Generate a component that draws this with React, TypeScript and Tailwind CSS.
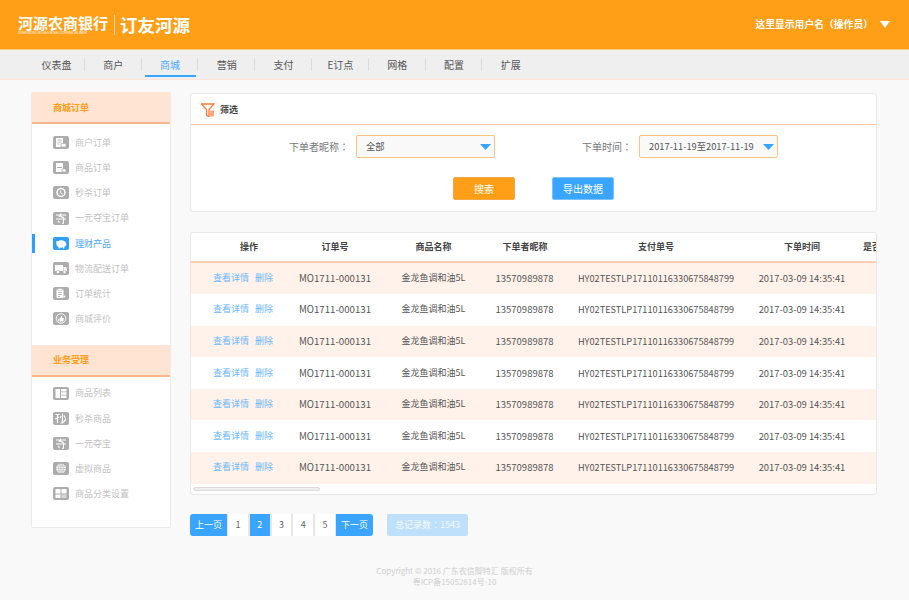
import React from "react";

const FONT = '"Noto Sans CJK SC","Noto Sans",sans-serif';
const TC = { fontFamily: '"Noto Sans CJK TC",sans-serif' };

const navItems = ["仪表盘", "商户", "商城", "营销", "支付", "E订点", "网格", "配置", "扩展"];

function Ico({ children, fill = "#acacac" }: { children: React.ReactNode; fill?: string }) {
  return (
    <svg width="16" height="13" viewBox="0 0 16 13" className="shrink-0">
      <rect width="16" height="13" rx="2" fill={fill} />
      {children}
    </svg>
  );
}

const W = "#fff";
const G = "#acacac";

const icons: Record<string, React.ReactNode> = {
  merchant: (
    <Ico>
      <path d="M3 2h7v9H3z" fill={W} />
      <path d="M4.5 4h4M4.5 6h4M4.5 8h2" stroke={G} strokeWidth="0.8" />
      <path d="M8 7.5h5v3.5H8z" fill={W} stroke={G} strokeWidth="0.7" />
    </Ico>
  ),
  goods: (
    <Ico>
      <path d="M3 2h7v9H3z" fill={W} />
      <path d="M4 6.5h5" stroke={G} strokeWidth="1" />
      <path d="M9 8h4v3H9z" fill={W} stroke={G} strokeWidth="0.7" />
    </Ico>
  ),
  clock: (
    <Ico>
      <circle cx="8" cy="6.5" r="4.7" fill={W} />
      <circle cx="8" cy="6.5" r="3.2" fill={G} />
      <path d="M7.6 4.4v2.4l2 1.2" stroke={W} strokeWidth="0.9" fill="none" />
    </Ico>
  ),
  duobao: (
    <Ico>
      <path d="M3 3h10M8 1.5L6 5M6.5 3.5L11 6M3 7h10M5 9l1.5 1.5M10.5 6v5l-1.5 .5" stroke={W} strokeWidth="1.1" fill="none" />
    </Ico>
  ),
  pig: (
    <Ico fill="#2f9fff">
      <ellipse cx="8.3" cy="7" rx="5" ry="3.7" fill={W} />
      <path d="M3 4l2.5 .5L4 7z" fill={W} />
      <path d="M5.5 10h1.5v1.5H5.5zM9.8 10h1.5v1.5H9.8z" fill={W} />
    </Ico>
  ),
  truck: (
    <Ico>
      <path d="M2 3h8v6H2z" fill={W} />
      <path d="M10.5 5H13l1 2v2h-3.5z" fill={W} />
      <circle cx="5" cy="10" r="1.6" fill={W} stroke={G} strokeWidth="0.6" />
      <circle cx="11.5" cy="10" r="1.6" fill={W} stroke={G} strokeWidth="0.6" />
    </Ico>
  ),
  stat: (
    <Ico>
      <path d="M3.5 2.5h7v8.5h-7z" fill={W} />
      <path d="M5 1.5h4v2H5z" fill={W} stroke={G} strokeWidth="0.5" />
      <path d="M5 5.5h4M5 7.5h4M5 9.5h2" stroke={G} strokeWidth="0.8" />
      <circle cx="11.5" cy="9.5" r="1" fill={W} />
    </Ico>
  ),
  review: (
    <Ico>
      <circle cx="8" cy="6.5" r="4.8" fill="none" stroke={W} strokeWidth="0.9" />
      <path d="M5.2 6.5h1.3v3H5.2zM7 6.5l1.4-2.6 .8.4-.3 1.7h2l-.5 3.5H7z" fill={W} />
    </Ico>
  ),
  list: (
    <Ico>
      <path d="M2.5 2h4.5v9H2.5z" fill={W} />
      <path d="M8 2h5.5v2.4H8zM8 5.3h5.5v2.4H8zM8 8.6h5.5V11H8z" fill={W} />
    </Ico>
  ),
  miao: (
    <Ico>
      <path d="M2.5 2.5h4M4.5 2.5v8.5M2.2 7l4-2M9.5 1.5v7.5l-1 .5M8 4L7.2 6M11 3.5l1.3 2.5M12.8 6.5c-.6 2.5-2 4-5 4.7" stroke={W} strokeWidth="1.1" fill="none" />
    </Ico>
  ),
  globe: (
    <Ico>
      <circle cx="8" cy="6.5" r="4.8" fill={W} />
      <path d="M3.2 6.5h9.6M3.9 4.2h8.2M3.9 8.8h8.2M8 1.7v9.6" stroke={G} strokeWidth="0.6" />
      <ellipse cx="8" cy="6.5" rx="2.3" ry="4.8" fill="none" stroke={G} strokeWidth="0.6" />
    </Ico>
  ),
  cat: (
    <Ico>
      <path d="M2.5 2h5v4.5h-5zM8.5 2h5v4.5h-5zM2.5 7.5h5V11h-5z" fill={W} />
      <path d="M8.5 7.5h5V11h-5z" fill="#d9d9d9" />
    </Ico>
  ),
};

const section1: [string, string][] = [
  ["商户订单", "merchant"],
  ["商品订单", "goods"],
  ["秒杀订单", "clock"],
  ["一元夺宝订单", "duobao"],
  ["理财产品", "pig"],
  ["物流配送订单", "truck"],
  ["订单统计", "stat"],
  ["商城评价", "review"],
];
const section2: [string, string][] = [
  ["商品列表", "list"],
  ["秒杀商品", "miao"],
  ["一元夺宝", "duobao"],
  ["虚拟商品", "globe"],
  ["商品分类设置", "cat"],
];

function SideHead({ title }: { title: string }) {
  return (
    <div className="flex h-[32px] items-center border-b-2 border-[#ffb68c] bg-[#ffe3d3] pl-[21px] pt-[1px] text-[9px] font-bold text-[#ff9f18]">
      {title}
    </div>
  );
}

function SideItem({ label, icon, active }: { label: string; icon: string; active?: boolean }) {
  return (
    <div className="relative flex h-[25.2px] items-center gap-[6px] pl-[21px]">
      {active && <span className="absolute left-0 top-[3px] h-[19px] w-[3px] bg-[#2f9fff]" />}
      {icons[icon]}
      <span className={`text-[9px] ${active ? "text-[#4aa8ff]" : "text-[#c2c2c2]"}`}>{label}</span>
    </div>
  );
}

function Tri({ color, w, h }: { color: string; w: number; h: number }) {
  return (
    <svg width={w} height={h} viewBox="0 0 10 6" preserveAspectRatio="none" className="shrink-0">
      <path d="M0 0h10L5 6z" fill={color} />
    </svg>
  );
}

function Select({ text }: { text: string }) {
  return (
    <div className="flex h-[23px] w-[139px] items-center justify-between rounded-[2px] border border-[#ffc47c] bg-[#f9f9f9] pl-[9px] pr-[3px] pt-[1px] text-[9.3px] text-[#555]">
      <span>{text}</span>
      <Tri color="#3aa5ff" w={11} h={6} />
    </div>
  );
}

function Colon() {
  return <span style={TC}>：</span>;
}

const GRID = "grid grid-cols-[106px_76px_121px_62px_200px_92px_80px] items-center text-center";

export default function App() {
  return (
    <div className="min-h-[600px] bg-[#f9f9f9]" style={{ fontFamily: FONT }}>
      <header className="flex h-[50px] items-center justify-between border-b border-[#ffc77f] bg-[#ff9f18] pl-[18px] pr-[19px] text-white">
        <div className="flex items-center">
          <div className="flex w-[91px] flex-col font-bold leading-none">
            <span className="whitespace-nowrap text-[15px] leading-[15px]">河源农商银行</span>
            <span className="mt-[2px] whitespace-nowrap text-[3px] font-normal leading-[3px]">GUANGDONG HEYUAN RURAL COMMERCIAL BANK</span>
          </div>
          <span className="mx-[5px] h-[20px] w-px bg-[#ffd9a0]" />
          <span className="whitespace-nowrap text-[17.5px] font-bold leading-none">订友河源</span>
        </div>
        <div className="flex items-center gap-[7px] text-[9.8px] font-bold">
          <span>
            这里显示用户名<span style={TC}>（</span>操作员<span style={TC}>）</span>
          </span>
          <Tri color="#fff" w={10} h={7} />
        </div>
      </header>

      <nav className="flex h-[30px] border-b border-[#fbe6da] bg-[#efefef] pl-[28px]">
        {navItems.map((n, i) => (
          <div key={n} className="relative flex h-[29px] w-[56.8px] items-center justify-center">
            <span className={`text-[10px] ${n === "商城" ? "text-[#4aa8ff]" : "text-[#555]"}`}>{n}</span>
            {i < navItems.length - 1 && <span className="absolute right-0 top-[8px] h-[13px] w-px bg-[#dcdcdc]" />}
            {n === "商城" && <span className="absolute bottom-[2px] left-[3px] h-[2px] w-[51px] bg-[#3aa5ff]" />}
          </div>
        ))}
      </nav>

      <div className="flex gap-[19px] pl-[31px] pr-[32px] pt-[12px]">
        <aside className="h-[436px] w-[140px] shrink-0 rounded-[2px] border-x border-b border-[#ececec] bg-white">
          <SideHead title="商城订单" />
          <div className="py-[6px]">
            {section1.map(([l, ic]) => (
              <SideItem key={l} label={l} icon={ic} active={l === "理财产品"} />
            ))}
          </div>
          <div className="mt-[7px]">
            <SideHead title="业务受理" />
            <div className="py-[4px]">
              {section2.map(([l, ic]) => (
                <SideItem key={l} label={l} icon={ic} />
              ))}
            </div>
          </div>
        </aside>

        <main className="min-w-0 flex-1">
          <section className="mt-[1px] h-[119px] rounded-[3px] border border-[#e8e8e8] bg-white">
            <div className="flex h-[31px] items-center gap-[5px] border-b border-[#ffc5a3] pl-[10px] pt-[1px]">
              <svg width="14" height="14" viewBox="0 0 14 14">
                <path d="M0.5 1h12.5l-5 5.5v7l-2.5-1v-6z" fill="none" stroke="#ff7a3c" strokeWidth="1.3" />
                <path d="M8.5 7.5h4.5v6H8.5z" fill="#ffa77c" />
              </svg>
              <span className="text-[9px] font-bold text-[#444]">筛选</span>
            </div>
            <div className="mt-[10px] flex h-[23px] items-center text-[10px] text-[#777]">
              <span className="ml-[98px] w-[67px] whitespace-nowrap">
                下单者昵称
                <Colon />
              </span>
              <Select text="全部" />
              <span className="ml-[87px] w-[57px] whitespace-nowrap">
                下单时间
                <Colon />
              </span>
              <Select text="2017-11-19至2017-11-19" />
            </div>
            <div className="ml-[262px] mt-[19px] flex gap-[37px] text-[10px] text-white">
              <button className="h-[23px] w-[62px] rounded-[2px] border border-[#f5a84a] bg-[#ff9f18]">搜索</button>
              <button className="h-[23px] w-[62px] rounded-[2px] border border-[#7cc1f7] bg-[#3aa5ff]">导出数据</button>
            </div>
          </section>

          <section className="relative mt-[20px] h-[263px] overflow-hidden rounded-[3px] border border-[#e8e8e8] bg-white text-[9.4px] text-[#555]">
            <div className={`${GRID} h-[29.5px] w-[737px] border-b-2 border-[#ffcfb3] text-[9px] font-bold text-[#444]`}>
              <span className="pl-[10px]">操作</span>
              <span>订单号</span>
              <span>商品名称</span>
              <span>下单者昵称</span>
              <span>支付单号</span>
              <span>下单时间</span>
              <span className="whitespace-nowrap pl-[15px] text-left">是否上架</span>
            </div>
            {[0, 1, 2, 3, 4, 5, 6].map((i) => (
              <div key={i} className={`${GRID} h-[31.6px] w-[737px] pb-[1px] leading-[12px] ${i % 2 === 0 ? "bg-[#fff2ea]" : "bg-white"}`}>
                <span className="flex justify-center gap-[6px] pr-[2px] text-[9px] text-[#6db8f7]">
                  <span>查看详情</span>
                  <span>删除</span>
                </span>
                <span className="whitespace-nowrap text-[9.7px]">MO1711-000131</span>
                <span className="whitespace-nowrap text-[9px]">金龙鱼调和油5L</span>
                <span className="pr-[1px] text-[9.5px]">13570989878</span>
                <span className="whitespace-nowrap text-[9.2px]">HY02TESTLP17110116330675848799</span>
                <span className="whitespace-nowrap">2017-03-09 14:35:41</span>
                <span />
              </div>
            ))}
            <div className="absolute bottom-[3px] left-[2px] h-[4px] w-[127px] rounded-full border border-[#dcdcdc] bg-[#efefef]" />
          </section>

          <div className="mt-[19px] flex items-start">
            <div className="flex h-[22px] overflow-hidden rounded-[3px] text-[9px]">
              <span className="flex w-[37px] items-center justify-center bg-[#3aa5ff] text-white">上一页</span>
              {["1", "2", "3", "4", "5"].map((p) => (
                <span
                  key={p}
                  className={`flex w-[21.8px] items-center justify-center border-x border-[#e6e6e6] ${p === "2" ? "border-[#3aa5ff] bg-[#3aa5ff] text-white" : "bg-white text-[#666]"}`}
                >
                  {p}
                </span>
              ))}
              <span className="flex w-[37px] items-center justify-center bg-[#3aa5ff] text-white">下一页</span>
            </div>
            <span className="ml-[14px] flex h-[22px] w-[81px] items-center justify-center rounded-[2px] bg-[#bfe0fb] text-[9px] text-[#f2f9ff]">
              总记录数
              <Colon /> 1543
            </span>
          </div>
        </main>
      </div>

      <footer className="mt-[30px] pb-[10px] text-center text-[8px] leading-[10.5px] text-[#cfcfcf]">
        <div>Copyright © 2016 广东农信脚特汇 版权所有</div>
        <div>粤ICP备15052814号-10</div>
      </footer>
    </div>
  );
}
